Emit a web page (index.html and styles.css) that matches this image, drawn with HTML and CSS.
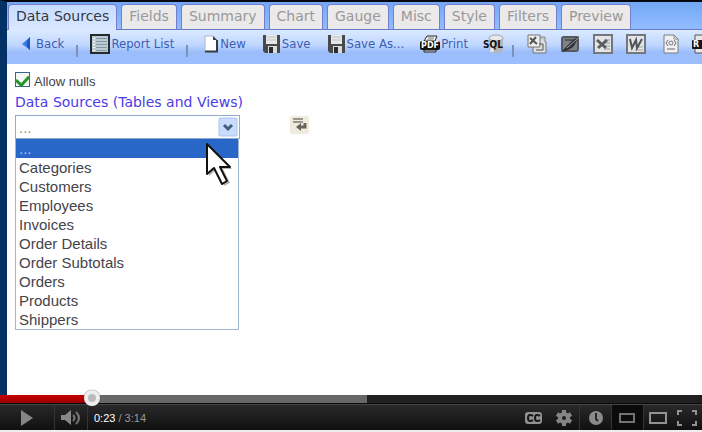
FILE: index.html
```html
<!DOCTYPE html>
<html lang="en">
<head>
<meta charset="utf-8">
<title>Report Designer</title>
<link rel="stylesheet" href="styles.css">
</head>
<body>
<main class="screen">
  <nav class="tabs">
    <button class="tab active">Data Sources</button>
    <button class="tab">Fields</button>
    <button class="tab">Summary</button>
    <button class="tab">Chart</button>
    <button class="tab">Gauge</button>
    <button class="tab">Misc</button>
    <button class="tab">Style</button>
    <button class="tab">Filters</button>
    <button class="tab">Preview</button>
  </nav>

  <div class="toolbar">
    <div class="group first">
      <button class="tool back"><svg width="10" height="16" viewBox="0 0 10 16"><path d="M9 1v13L1 8z" fill="#397ee8"/><path d="M9 1v13L6 11V5z" fill="#1b58c4"/></svg>Back</button>
    </div>
    <div class="group">
      <button class="tool"><svg width="20" height="20" viewBox="0 0 20 20"><rect x="1" y="1" width="18" height="18" fill="#bccbd3" stroke="#252b2b" stroke-width="2"/><path d="M6 4.500h11M6 7.500h11M6 10.500h11M6 13.500h11M6 16.500h11" stroke="#8496a0"/><path d="M3 4.500h2M3 7.500h2M3 10.500h2M3 13.500h2M3 16.500h2" stroke="#f5fafc"/></svg>Report List</button>
    </div>
    <div class="group files">
      <button class="tool new"><svg width="14" height="18" viewBox="0 0 14 18"><path d="M1 1h8l4 4v12H1z" fill="#fff" stroke="#a9b6c8"/><path d="M1 16.500h12V5" fill="none" stroke="#333b48" stroke-width="2"/><path d="M9 1v4h4z" fill="#39414e"/></svg>New</button>
      <button class="tool"><svg width="19" height="20" viewBox="0 0 19 20"><path d="M1 1h17v18H3l-2-2z" fill="#48494b"/><path d="M4 1h11v9H4z" fill="#e5e7e8"/><path d="M5 3h9M5 6h9" stroke="#c0c4c6"/><path d="M6 12h9v7H6z" fill="#d8dbdc"/><path d="M7 13h4v6H7z" fill="#292a2c"/></svg>Save</button>
      <button class="tool"><svg width="19" height="20" viewBox="0 0 19 20"><path d="M1 1h17v18H3l-2-2z" fill="#48494b"/><path d="M4 1h11v9H4z" fill="#e5e7e8"/><path d="M5 3h9M5 6h9" stroke="#c0c4c6"/><path d="M6 12h9v7H6z" fill="#d8dbdc"/><path d="M7 13h4v6H7z" fill="#292a2c"/></svg>Save As...</button>
      <button class="tool"><svg width="20" height="18" viewBox="0 0 20 18"><path d="M7 1h10l-2 5H4z" fill="#f4f4f4" stroke="#25282b"/><path d="M8 3h6M7 5h6" stroke="#777"/><rect y="6" width="20" height="9" rx="2" fill="#111"/><path d="M4 15h12v2H4z" fill="#ddd" stroke="#222"/><text x="10" y="13" text-anchor="middle" class="badge-label">PDF</text></svg>Print</button>
      <button class="tool" aria-label="SQL"><svg width="20" height="20" viewBox="0 0 20 20"><path d="M5 4v12c2 4 12 4 14 0V4z" fill="#b5b7ba"/><path d="M8 6v12" stroke="#e9eaec" stroke-width="3"/><ellipse cx="12" cy="4" rx="7" ry="3" fill="#e8e9ea" stroke="#a3a5a8"/><text x="9" y="14" text-anchor="middle" class="sql-label">SQL</text></svg></button>
    </div>
    <div class="group exports">
      <button class="tool" aria-label="Export CSV"><svg width="20" height="20" viewBox="0 0 20 20"><path d="M6 4h9l4 4v11H6z" fill="#dedfe0" stroke="#727476"/><path d="M1 1h12v12H1z" fill="#eee" stroke="#777"/><path d="M3 4l7 6M9 3l-6 7" stroke="#555" stroke-width="2"/><path d="M12 10h4v6M9 16h7" fill="none" stroke="#555"/><path d="M13 3h5v5" fill="#ccc" stroke="#888"/></svg></button>
      <button class="tool" aria-label="Chart export"><svg width="20" height="20" viewBox="0 0 20 20"><rect x="2" y="3" width="16" height="14" rx="2" fill="#7e8286" stroke="#56595d" stroke-width="2"/><path d="M5 6h9" stroke="#54585b" stroke-width="2"/><path d="M19 2Q13 5 9 10L1 18q9-2 13-6z" fill="#303336"/><path d="M18 4L7 14" stroke="#a5a7a9"/></svg></button>
      <button class="tool" aria-label="Export Excel"><svg width="20" height="20" viewBox="0 0 20 20"><rect x="1" y="1" width="18" height="18" fill="#e2e4e5" stroke="#74777b" stroke-width="2"/><path d="M11 6h6M12 9h5M12 12h5M11 15h6" stroke="#96999c"/><path d="M4 6l9 8M14 6l-9 8" stroke="#5a5e61" stroke-width="3"/></svg></button>
      <button class="tool" aria-label="Export Word"><svg width="20" height="20" viewBox="0 0 20 20"><rect x="1" y="1" width="18" height="18" fill="#e2e4e5" stroke="#74777b" stroke-width="2"/><path d="M11 13h6M9 16h8" stroke="#a1a3a5"/><path d="M4 5l2 9 4-8 1 8 5-9" fill="none" stroke="#505457" stroke-width="2"/></svg></button>
      <button class="tool xml" aria-label="Export XML"><svg width="16" height="20" viewBox="0 0 16 20"><path d="M1 1h10l4 4v14H1z" fill="#f0f1f2" stroke="#7a7d81"/><path d="M11 1v4h4" fill="none" stroke="#888"/><path d="M5 6L3 9l2 3M11 6l2 3-2 3M4 15h8" fill="none" stroke="#66696c"/><circle cx="8" cy="9" r="2" fill="none" stroke="#777"/></svg></button>
      <button class="tool" aria-label="Export RTF"><svg width="20" height="20" viewBox="0 0 20 20"><path d="M3 1h13l3 3v15H3z" fill="#e7e7e7" stroke="#555"/><rect y="6" width="20" height="9" rx="1" fill="#171717"/><text x="1" y="13" class="badge-label">R</text></svg></button>
    </div>
  </div>

  <section class="content">
    <label class="nulls"><input type="checkbox" checked>Allow nulls</label>
    <label class="source-label" for="source">Data Sources (Tables and Views)</label>
    <div class="source-row">
      <div class="combo">
        <select id="source"><option>...</option></select>
        <svg class="arrow" width="20" height="20" viewBox="0 0 20 20"><rect x="1" y="1" width="18" height="18" rx="1" fill="#c9dcfb" stroke="#a9c4f0"/><path d="M6 8l4 4 4-4" fill="none" stroke="#435e83" stroke-width="3"/></svg>
        <ul class="options" role="listbox" aria-label="Data sources">
          <li role="option" aria-selected="true" class="selected">...</li>
          <li role="option">Categories</li>
          <li role="option">Customers</li>
          <li role="option">Employees</li>
          <li role="option">Invoices</li>
          <li role="option">Order Details</li>
          <li role="option">Order Subtotals</li>
          <li role="option">Orders</li>
          <li role="option">Products</li>
          <li role="option">Shippers</li>
        </ul>
        <svg class="cursor" width="32" height="48" viewBox="0 0 32 48"><path d="M4 4v30l7-6 8 16 6-3-7-14h9z" fill="#444" opacity=".4"/><path d="M2 2v30l7-6 8 16 5-3-7-14h10z" fill="#fff" stroke="#111" stroke-width="2" stroke-linejoin="round"/></svg>
      </div>
      <button class="insert" aria-label="Add data source"><svg width="19" height="18" viewBox="0 0 19 18"><rect width="19" height="18" rx="2" fill="#efebdf"/><path d="M3 3h10M3 6h10" stroke="#9a968c" stroke-width="2"/><path d="M15 7v4H9" fill="none" stroke="#69655c" stroke-width="3"/><path d="M11 7v8l-5-4z" fill="#69655c"/></svg></button>
    </div>
  </section>
</main>

<footer class="player">
  <div class="progress"><div class="loaded"></div><div class="played"></div><input type="range" min="0" max="194" value="23" aria-label="Seek"></div>
  <div class="controls">
    <button class="play" aria-label="Play"><svg width="14" height="16" viewBox="0 0 14 16"><path d="M1 0l12 8-12 8z" fill="#858585"/></svg></button>
    <button class="volume" aria-label="Volume"><svg width="20" height="16" viewBox="0 0 20 16"><path d="M0 5h4l6-5v15l-6-5H0z" fill="#888"/><path d="M12 5q3 3 0 6M15 2q6 6 0 12" fill="none" stroke="#777" stroke-width="2"/></svg></button>
    <div class="time"><span>0:23</span> / 3:14</div>
    <button class="cc" aria-label="Captions"><svg width="18" height="12" viewBox="0 0 18 12"><rect width="17" height="12" rx="3" fill="#929292"/><path d="M8 4Q7 3 5 3 3 3 3 6t2 3q2 0 3-1M15 4q-1-1-3-1-2 0-2 3t2 3q2 0 3-1" fill="none" stroke="#181818" stroke-width="2"/></svg></button>
    <button class="gear" aria-label="Settings"><svg width="18" height="18" viewBox="0 0 18 18"><path fill="none" stroke="#858585" stroke-width="4" d="M9 1v3M9 14v3M2 5l3 2M13 11l3 2M2 13l3-2M13 7l3-2"/><circle cx="9" cy="9" r="4" fill="none" stroke="#858585" stroke-width="4"/></svg></button>
    <button class="later" aria-label="Watch later"><svg width="14" height="14" viewBox="0 0 14 14"><circle cx="7" cy="7" r="7" fill="#8b8b8b"/><path d="M7 2v6l2 2" fill="none" stroke="#292929" stroke-width="2"/></svg></button>
    <button class="small" aria-label="Small player"><svg width="17" height="12" viewBox="0 0 17 12"><path d="M1 2h14v8H1z" fill="none" stroke="#737373" stroke-width="2"/></svg></button>
    <button class="large" aria-label="Large player"><svg width="18" height="12" viewBox="0 0 18 12"><path d="M1 1h16v10H1z" fill="none" stroke="#929292" stroke-width="2"/></svg></button>
    <button class="full" aria-label="Full screen"><svg width="20" height="16" viewBox="0 0 20 16"><path d="M1 5V1h4M15 1h4v4M19 11v4h-4M5 15H1v-4" fill="none" stroke="#929292" stroke-width="2"/></svg></button>
  </div>
</footer>
</body>
</html>
```
FILE: styles.css
```css
* { box-sizing: border-box; }
body {
  margin: 0;
  min-height: 100vh;
  display: flex;
  flex-direction: column;
  overflow: hidden;
  background: #f0f0f0;
  font-family: "Liberation Sans", sans-serif;
}
button { border: 0; margin: 0; padding: 0; background: none; font: inherit; color: inherit; }
svg { display: block; flex: none; overflow: visible; }
.screen {
  flex: 1;
  border-top: 2px solid #05080d;
  border-left: 7px solid #033065;
  background: #fefefe;
  overflow: hidden;
}
.tabs {
  height: 28px;
  padding: 2px 1px 0;
  display: flex;
  gap: 4px;
  align-items: stretch;
  background: linear-gradient(#71a7f5, #92bdff);
  border-bottom: 1px solid #6579c9;
}
.tab {
  padding: 0 7px 3px;
  border: 1px solid #747eca;
  border-bottom: 0;
  border-radius: 4px 4px 0 0;
  background: #ebe9e9;
  color: #999;
  font: 14px/20px "DejaVu Sans", sans-serif;
  white-space: nowrap;
}
.tab.active {
  margin-bottom: -1px;
  padding-bottom: 4px;
  background: linear-gradient(#c6dcff, #dbe8ff);
  color: #343944;
}
.toolbar {
  height: 34px;
  padding-bottom: 6px;
  display: flex;
  align-items: center;
  background: linear-gradient(#dceaff, #bed6ff 45%, #9bbdfc 65%, #9dbefc);
  color: #3d5db5;
  font: 13px/20px "DejaVu Sans Condensed", "DejaVu Sans", sans-serif;
}
.group { display: flex; align-items: center; flex: none; padding: 0 12px; }
.group + .group::before {
  content: "";
  width: 2px;
  height: 12px;
  margin: 14px 12px 0 -12px;
  background: #7a91b9;
}
.group.first { padding-left: 14px; }
.group.files { gap: 16px; padding: 0 8px 0 12px; }
.group.files::before, .group.exports::before { margin-right: 0; }
.exports { gap: 13px; }
.xml { margin-left: 4px; }
.tool { display: flex; align-items: center; gap: 1px; flex: none; white-space: nowrap; }
.tool.back { gap: 5px; }
.tool.new { gap: 2px; }
.badge-label { fill: #fff; font: bold 8px "DejaVu Sans", sans-serif; }
.sql-label { fill: #111; font: bold 10px "DejaVu Sans Condensed", sans-serif; }
.content { padding: 8px; color: #45434b; }
.nulls {
  display: flex;
  align-items: center;
  gap: 4px;
  height: 20px;
  font-size: 13px;
  line-height: 20px;
}
.nulls input {
  appearance: none;
  width: 15px;
  height: 15px;
  margin: 0 0 6px;
  border: 1px solid #356693;
  background: #f5f7f4;
  display: grid;
  place-items: center;
}
.nulls input::after {
  content: "";
  width: 6px;
  height: 10px;
  margin-bottom: 3px;
  border: solid #20962b;
  border-width: 0 3px 3px 0;
  transform: rotate(42deg);
}
.source-label {
  display: block;
  color: #4b3be7;
  font: 14px/20px "DejaVu Sans", sans-serif;
}
.source-row { display: flex; align-items: flex-start; gap: 50px; margin-top: 3px; }
.combo { position: relative; width: 225px; }
.combo select {
  appearance: none;
  display: block;
  width: 100%;
  height: 24px;
  padding: 2px 3px 0;
  border: 1px solid #8daccc;
  border-radius: 0;
  background: #fff;
  color: #99927b;
  font: 15px/20px "Liberation Sans", sans-serif;
}
.arrow { position: absolute; top: 2px; right: 2px; }
.options {
  position: absolute;
  top: 100%;
  left: 0;
  right: 1px;
  margin: 0;
  padding: 0;
  list-style: none;
  border: 1px solid #9fb6d0;
  border-top: 0;
  background: #fff;
  font-size: 15px;
  line-height: 19px;
}
.options li { padding: 0 3px; }
.options .selected { background: #2866c7; color: #adcdf3; }
.cursor { position: absolute; top: 27px; left: 190px; }
.insert { margin-top: 1px; }
.player { flex: none; padding-bottom: 2px; background: #ededed; }
.progress { position: relative; height: 9px; background: #202020; border-bottom: 1px solid #090909; }
.loaded, .played { position: absolute; inset: 0 auto 0 0; }
.loaded { width: 52.3%; background: #686868; }
.played { width: 13%; background: linear-gradient(#c90000, #990000); }
.progress input {
  appearance: none;
  position: absolute;
  inset: -5px 0 auto 3px;
  height: 16px;
  width: 100%;
  margin: 0;
  background: transparent;
}
.progress input::-webkit-slider-thumb {
  appearance: none;
  width: 16px;
  height: 16px;
  border: 4px solid #eee;
  border-radius: 50%;
  background: #bbb;
  box-shadow: 0 0 1px #555;
}
.controls {
  display: flex;
  height: 26px;
  border-top: 1px solid #454545;
  background: linear-gradient(#292929, #101010);
}
.controls button { display: grid; place-items: center; border-right: 1px solid #343434; }
.controls .play { width: 55px; }
.controls .volume { width: 33px; }
.time { flex: 1; padding-left: 6px; color: #999; font-size: 11px; line-height: 26px; }
.time span { color: #fff; }
.controls .cc { width: 30px; border: 0; }
.controls .gear { width: 31px; }
.controls .later { width: 32px; }
.controls .small { width: 32px; background: #0b0b0b; }
.controls .large { width: 28px; border: 0; }
.controls .full { width: 30px; border: 0; }
```
